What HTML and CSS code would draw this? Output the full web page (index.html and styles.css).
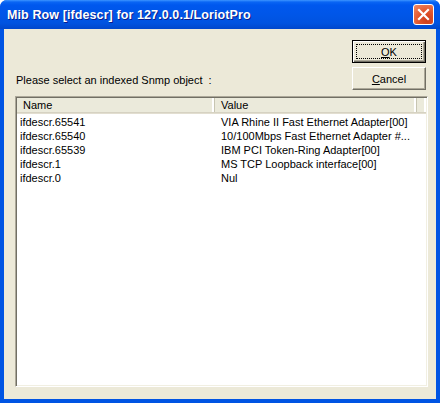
FILE: index.html
```html
<!DOCTYPE html>
<html lang="en">
<head>
    <meta charset="UTF-8">
    <meta name="viewport" content="width=device-width, initial-scale=1.0">
    <title>Mib Row [ifdescr] for 127.0.0.1/LoriotPro</title>
    <link rel="stylesheet" href="styles.css">
</head>
<body>
    <div class="window">
        <div class="titlebar">
            <span class="title">Mib Row [ifdescr] for 127.0.0.1/LoriotPro</span>
            <button class="close" title="Close">
                <svg width="13" height="13" viewBox="0 0 13 13">
                    <path d="M2 2 L11 11 M11 2 L2 11" stroke="#fff" stroke-width="2.2" stroke-linecap="square"/>
                </svg>
            </button>
        </div>

        <div class="client">
            <div class="top-row">
                <span class="prompt">Please select an indexed Snmp object &nbsp;:</span>
                <div class="buttons">
                    <button class="btn default"><span class="focus"><u>O</u>K</span></button>
                    <button class="btn"><u>C</u>ancel</button>
                </div>
            </div>

            <div class="listview">
                <div class="header">
                    <div class="col name">Name</div>
                    <div class="col value">Value</div>
                    <div class="col filler"></div>
                </div>
                <div class="rows">
                    <div class="row"><span class="name">ifdescr.65541</span><span class="value">VIA Rhine II Fast Ethernet Adapter[00]</span></div>
                    <div class="row"><span class="name">ifdescr.65540</span><span class="value">10/100Mbps Fast Ethernet Adapter #...</span></div>
                    <div class="row"><span class="name">ifdescr.65539</span><span class="value">IBM PCI Token-Ring Adapter[00]</span></div>
                    <div class="row"><span class="name">ifdescr.1</span><span class="value">MS TCP Loopback interface[00]</span></div>
                    <div class="row"><span class="name">ifdescr.0</span><span class="value">Nul</span></div>
                </div>
            </div>
        </div>
    </div>
</body>
</html>
```

FILE: styles.css
```css
body {
    margin: 0;
    background-color: #fff;
    font-family: 'Liberation Sans', Arial, sans-serif;
    font-size: 11px;
    color: #000;
}

.window {
    width: 440px;
    height: 403px;
    box-sizing: border-box;
    display: flex;
    flex-direction: column;
    background-color: #0054e3;
    border-radius: 7px 7px 0 0;
    overflow: hidden;
}

/* Luna blue caption */
.titlebar {
    height: 29px;
    flex-shrink: 0;
    display: flex;
    align-items: center;
    justify-content: space-between;
    padding: 0 6px 0 7px;
    background: linear-gradient(to bottom, #3d95ff 0, #0a66f4 2px, #0058ee 5px, #0056e8 50%, #0053e0 80%, #0047cc 100%);
}

.title {
    color: #fff;
    font-weight: bold;
    font-size: 12.5px;
    text-shadow: 1px 1px 0 #0a1e8c;
    letter-spacing: 0.1px;
}

.close {
    width: 21px;
    height: 21px;
    padding: 0;
    display: flex;
    align-items: center;
    justify-content: center;
    border: 1px solid #fff;
    border-radius: 3px;
    background: radial-gradient(circle at 70% 80%, #cc3c1a 0, #e2552c 45%, #f08c68 100%);
}

.client {
    flex: 1;
    margin: 0 4px 4px 4px;
    background-color: #ece9d8;
    display: flex;
    flex-direction: column;
    padding: 11px 8px 12px 11px;
}

.top-row {
    display: flex;
    justify-content: space-between;
    align-items: flex-end;
}

.prompt {
    margin-bottom: 4px;
    margin-left: 1px;
}

.buttons {
    display: flex;
    flex-direction: column;
    gap: 4px;
    margin-right: 2px;
}

.btn {
    width: 74px;
    height: 23px;
    padding: 0;
    font-family: inherit;
    font-size: 11px;
    color: #000;
    background-color: #ece9d8;
    border: 1px solid;
    border-color: #fff #716f64 #716f64 #fff;
    box-shadow: inset -1px -1px 0 #aca899;
}

.btn.default {
    border: 1px solid #000;
    box-shadow: inset 1px 1px 0 #fff, inset -1px -1px 0 #716f64, inset -2px -2px 0 #aca899;
    padding: 3px;
}

.btn .focus {
    display: flex;
    height: 100%;
    align-items: center;
    justify-content: center;
    border: 1px dotted #000;
    box-sizing: border-box;
}

.listview {
    flex: 1;
    margin-top: 6px;
    background-color: #fff;
    border: 1px solid;
    border-color: #aca899 #fff #fff #aca899;
    box-shadow: inset 1px 1px 0 #716f64, inset -1px -1px 0 #f1efe2;
    padding: 1px;
    display: flex;
    flex-direction: column;
}

.header {
    display: flex;
    height: 14px;
    background-color: #ebeadb;
    border-bottom: 1px solid #d6d2c2;
    box-shadow: 0 1px 0 #e2ded0;
}

.header .col {
    box-sizing: border-box;
    padding-left: 6px;
    line-height: 14px;
    border-right: 1px solid #c7c5b2;
    box-shadow: inset -2px 0 0 #fff;
}

.header .name { width: 198px; }
.header .value { width: 202px; }
.header .filler { flex: 1; border-right: none; }

.rows {
    padding-top: 2px;
}

.row {
    display: flex;
    height: 14px;
    line-height: 14px;
}

.row .name {
    width: 198px;
    padding-left: 3px;
    box-sizing: border-box;
}

.row .value {
    padding-left: 6px;
}
```
